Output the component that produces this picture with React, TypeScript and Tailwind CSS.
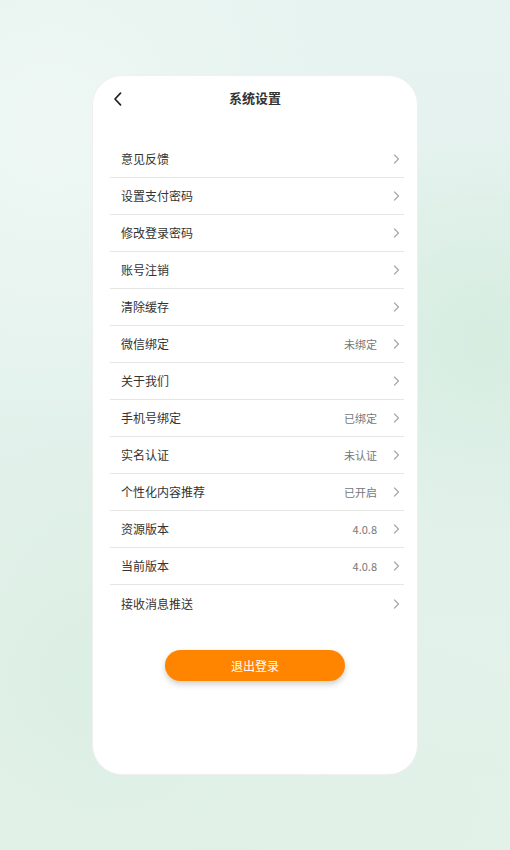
import React from "react";

const rows: { label: string; value?: string }[] = [
  { label: "意见反馈" },
  { label: "设置支付密码" },
  { label: "修改登录密码" },
  { label: "账号注销" },
  { label: "清除缓存" },
  { label: "微信绑定", value: "未绑定" },
  { label: "关于我们" },
  { label: "手机号绑定", value: "已绑定" },
  { label: "实名认证", value: "未认证" },
  { label: "个性化内容推荐", value: "已开启" },
  { label: "资源版本", value: "4.0.8" },
  { label: "当前版本", value: "4.0.8" },
  { label: "接收消息推送" },
];

function Chevron() {
  return (
    <svg width="7" height="10" viewBox="0 0 7 10" fill="none">
      <path d="M1.5 1L5.5 5L1.5 9" stroke="#a8a8a8" strokeWidth="1.2" strokeLinecap="round" strokeLinejoin="round" />
    </svg>
  );
}

export default function App() {
  return (
    <div
      className="w-[510px] h-[850px] flex justify-center pt-[75px] bg-[#e4f2ed] bg-[radial-gradient(circle_at_10%_15%,#eef7f3_0%,transparent_35%),radial-gradient(circle_at_95%_40%,#d6ede0_0%,transparent_30%),radial-gradient(circle_at_20%_80%,#dcefe4_0%,transparent_40%),radial-gradient(circle_at_80%_95%,#e2f1e8_0%,transparent_40%),linear-gradient(180deg,#e6f3f0_0%,#e3f1ec_60%,#e5f2ea_100%)]"
      style={{ fontFamily: '"Noto Sans CJK SC", "Noto Sans", sans-serif' }}
    >
      <div className="w-[326px] h-[700px] rounded-[30px] bg-white border border-[#f0f0f0] flex flex-col">
        <div className="relative h-[46px] flex items-center justify-center">
          <div className="absolute left-[20px] top-[16px]">
            <svg width="10" height="14" viewBox="0 0 10 14" fill="none">
              <path d="M7.5 1.2L2 7L7.5 12.8" stroke="#222" strokeWidth="1.7" strokeLinecap="round" strokeLinejoin="round" />
            </svg>
          </div>
          <span className="text-[13px] font-bold text-[#333] leading-none -mt-[4px]">系统设置</span>
        </div>
        <div className="mt-[19px] ml-[17px] mr-[13px] flex flex-col">
          {rows.map((r, i) => (
            <div
              key={r.label}
              className={`h-[37px] flex items-center pl-[11px] pr-[4px] ${i < rows.length - 1 ? "border-b border-[#e6e6e6]" : ""}`}
            >
              <span className="flex-1 text-[12px] text-[#333]">{r.label}</span>
              {r.value && <span className="text-[11px] text-[#777] mr-[16px]">{r.value}</span>}
              <Chevron />
            </div>
          ))}
        </div>
        <div className="mt-[28px] flex justify-center">
          <button className="w-[180px] h-[31px] rounded-full bg-[#ff8500] text-white text-[12px] shadow-[0_3px_6px_rgba(0,0,0,0.2)]">
            退出登录
          </button>
        </div>
      </div>
    </div>
  );
}
